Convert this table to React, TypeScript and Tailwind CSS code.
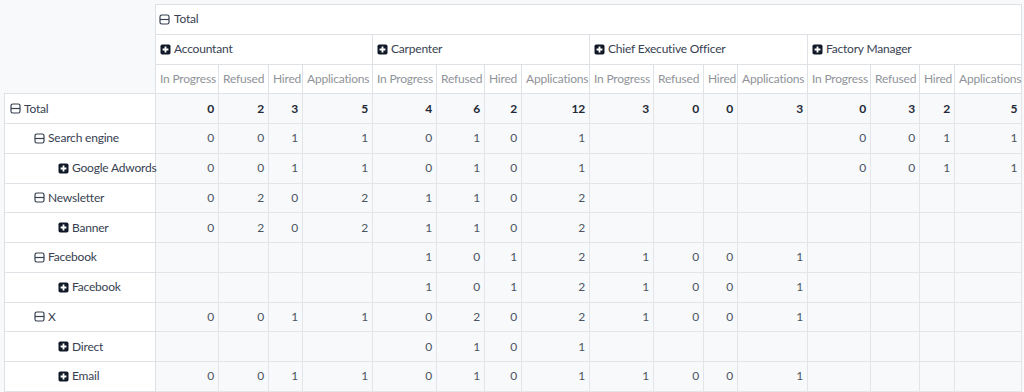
import React from 'react';

type Cell = number | null;

const measures = ['In Progress', 'Refused', 'Hired', 'Applications'];

const groups = [
  { name: 'Accountant', widths: ['w-[63px]', 'w-[50px]', 'w-[34px]', 'w-[70px]'] },
  { name: 'Carpenter', widths: ['w-[64px]', 'w-[48px]', 'w-[37px]', 'w-[68px]'] },
  { name: 'Chief Executive Officer', widths: ['w-[64px]', 'w-[50px]', 'w-[34px]', 'w-[70px]'] },
  { name: 'Factory Manager', widths: ['w-[63px]', 'w-[49px]', 'w-[35px]', 'w-[67px]'] },
];

const E: Cell[] = [null, null, null, null];

const rows: { label: string; level: number; values: Cell[] }[] = [
  { label: 'Total', level: 0, values: [0, 2, 3, 5, 4, 6, 2, 12, 3, 0, 0, 3, 0, 3, 2, 5] },
  { label: 'Search engine', level: 1, values: [0, 0, 1, 1, 0, 1, 0, 1, ...E, 0, 0, 1, 1] },
  { label: 'Google Adwords', level: 2, values: [0, 0, 1, 1, 0, 1, 0, 1, ...E, 0, 0, 1, 1] },
  { label: 'Newsletter', level: 1, values: [0, 2, 0, 2, 1, 1, 0, 2, ...E, ...E] },
  { label: 'Banner', level: 2, values: [0, 2, 0, 2, 1, 1, 0, 2, ...E, ...E] },
  { label: 'Facebook', level: 1, values: [...E, 1, 0, 1, 2, 1, 0, 0, 1, ...E] },
  { label: 'Facebook', level: 2, values: [...E, 1, 0, 1, 2, 1, 0, 0, 1, ...E] },
  { label: 'X', level: 1, values: [0, 0, 1, 1, 0, 2, 0, 2, 1, 0, 0, 1, ...E] },
  { label: 'Direct', level: 2, values: [...E, 0, 1, 0, 1, ...E, ...E] },
  { label: 'Email', level: 2, values: [0, 0, 1, 1, 0, 1, 0, 1, 1, 0, 0, 1, ...E] },
];

// outlined square with a bar (collapse)
function MinusSquare() {
  return (
    <svg width="11" height="11" viewBox="0 0 11 11" className="shrink-0 text-[#374151]">
      <rect x="1" y="1" width="9" height="9" rx="1.8" fill="none" stroke="currentColor" strokeWidth="1.2" />
      <line x1="1" y1="5.5" x2="10" y2="5.5" stroke="currentColor" strokeWidth="1.2" />
    </svg>
  );
}

// filled square with a plus (expand)
function PlusSquare() {
  return (
    <svg width="11" height="11" viewBox="0 0 11 11" className="shrink-0">
      <rect x="0.5" y="0.5" width="10" height="10" rx="1.8" fill="#111827" />
      <path d="M5.5 2.6v5.8M2.6 5.5h5.8" stroke="#fff" strokeWidth="1.8" />
    </svg>
  );
}

const indents = ['pl-[5px]', 'pl-[29px]', 'pl-[53px]'];

export default function App() {
  return (
    <div
      className="w-[1024px] h-[392px] overflow-hidden bg-[#f8f9fa] pt-[4px] pl-[4px] text-[12px] tracking-[-0.2px] text-[#374151]"
      style={{ fontFamily: 'Lato, "Noto Sans", sans-serif' }}
    >
      <table className="table-fixed border-collapse w-[1018px]">
        <colgroup>
          <col className="w-[151px]" />
          {groups.map((g) => g.widths.map((w, i) => <col key={g.name + i} className={w} />))}
        </colgroup>
        <thead>
          <tr className="h-[29.75px]">
            <th rowSpan={3} className="p-0" />
            <th colSpan={16} className="bg-white border border-[#dee2e6] px-[3px] text-left font-normal">
              <div className="flex items-center gap-[4px]">
                <MinusSquare />
                <span>Total</span>
              </div>
            </th>
          </tr>
          <tr className="h-[29.75px]">
            {groups.map((g) => (
              <th key={g.name} colSpan={4} className="bg-white border border-[#dee2e6] px-[4px] text-left font-normal">
                <div className="flex items-center gap-[3px] whitespace-nowrap">
                  <PlusSquare />
                  <span>{g.name}</span>
                </div>
              </th>
            ))}
          </tr>
          <tr className="h-[29.75px]">
            {groups.map((g) =>
              measures.map((m) => (
                <th
                  key={g.name + m}
                  className="bg-white border border-[#dee2e6] px-[4px] text-left font-normal text-[#8f9399] whitespace-nowrap"
                >
                  {m}
                </th>
              ))
            )}
          </tr>
        </thead>
        <tbody>
          {rows.map((r, ri) => (
            <tr key={ri} className="h-[29.75px]">
              <td className={`bg-white border border-[#dee2e6] ${indents[r.level]} whitespace-nowrap`}>
                <div className="flex items-center gap-[3px]">
                  {r.level === 2 ? <PlusSquare /> : <MinusSquare />}
                  <span>{r.label}</span>
                </div>
              </td>
              {r.values.map((v, ci) => (
                <td
                  key={ci}
                  className={`bg-[#f8f9fa] border border-[#e3e5e8] pr-[4px] text-right ${
                    ri === 0 ? 'font-bold text-[#1f2937]' : 'text-[#4b5563]'
                  }`}
                >
                  {v === null ? '' : v}
                </td>
              ))}
            </tr>
          ))}
        </tbody>
      </table>
    </div>
  );
}
